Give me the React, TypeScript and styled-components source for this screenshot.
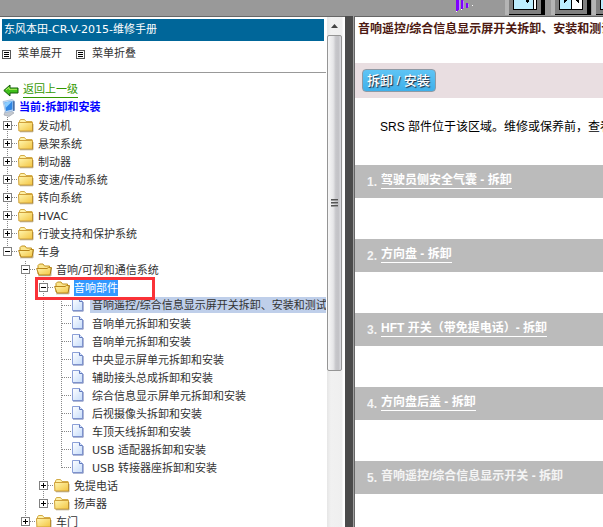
import React from "react";
import styled, { createGlobalStyle, css } from "styled-components";

const GlobalStyle = createGlobalStyle`
  * { box-sizing: border-box; }
  html, body, #root { height: 100%; }
  body { margin: 0; overflow: hidden; background: #fff; }
`;

const Page = styled.div`
  height: 100%;
  display: grid;
  grid-template-rows: 16px minmax(0, 1fr);
  grid-template-columns: 345px 10px minmax(0, 1fr);
`;

const TopBar = styled.header`
  grid-column: 1 / -1;
  background: #999;
  display: flex;
  justify-content: flex-end;
  overflow: hidden;
`;

const Sidebar = styled.aside`
  display: grid;
  grid-template-columns: minmax(0, 1fr) 19px;
  border-top: 1px solid #666;
  min-height: 0;
  font: 11px/18px "DejaVu Sans", "Noto Sans CJK SC", sans-serif;
  color: #333;
`;

const Divider = styled.div`
  background: linear-gradient(90deg, #4b4b4b 0 8px, #a0a0a0 8px 9px, #666 9px);
`;

const MenuPane = styled.nav`
  overflow: hidden;
  padding-top: 2px;
`;

const ManualTitle = styled.h1`
  margin: 0 2px;
  padding-left: 2px;
  height: 22px;
  font: inherit;
  line-height: 22px;
  color: #fff;
  background: #069;
`;

const Actions = styled.div`
  display: flex;
  gap: 14px;
  height: 32px;
  padding: 4px 2px 0;
  border-bottom: 1px solid #999;
`;

const ActionButton = styled.button`
  display: flex;
  align-items: center;
  gap: 7px;
  height: 18px;
  padding: 0;
  border: 0;
  background: none;
  font: inherit;
  color: inherit;
`;

const BackLink = styled.a`
  display: flex;
  align-items: center;
  gap: 4px;
  height: 18px;
  margin-top: 8px;
  padding-left: 3px;
  color: #390;
  text-decoration: none;
  span { line-height: 14px; border-bottom: 1px solid #390; }
`;

const Current = styled.div`
  display: flex;
  align-items: center;
  gap: 3px;
  height: 18px;
  padding-left: 2px;
  line-height: 20px;
  color: #00f;
  font-weight: 700;
`;

const TreeList = styled.ul`
  list-style: none;
  margin: 0;
  padding: 0;
`;

const TreeRow = styled.li`
  display: flex;
  height: 18px;
  white-space: nowrap;
`;

const Rail = styled.span<{ $line: boolean }>`
  flex: none;
  width: 18px;
  background: ${(p) =>
    p.$line
      ? "repeating-linear-gradient(#888 0 1px, transparent 1px 2px) 7px 0 / 1px 100% no-repeat"
      : "none"};
`;

const Toggle = styled.button`
  flex: none;
  width: 18px;
  height: 18px;
  padding: 0;
  border: 0;
  background: none;
  svg { display: block; }
`;

const IconCell = styled.span`
  flex: none;
  width: 18px;
  svg { display: block; }
`;

const Label = styled.a<{ $state?: "marked" | "current" }>`
  margin: 1px 0 0 2px;
  height: 16px;
  line-height: 17px;
  color: inherit;
  text-decoration: none;
  ${(p) => p.$state === "marked" && css`background: #39f; color: #fff;`}
  ${(p) =>
    p.$state === "current" &&
    css`
      margin: 0;
      padding-left: 2px;
      flex: 1;
      overflow: hidden;
      background: #bfcfea;
    `}
`;

const MarkedRow = styled.div`
  position: relative;
  display: flex;
`;

const Marker = styled.span`
  position: absolute;
  left: -1px;
  top: -2px;
  width: 120px;
  height: 23px;
  border: 3px solid #fa3238;
`;

const ScrollTrack = styled.div`
  display: flex;
  flex-direction: column;
  padding-right: 2px;
  background: linear-gradient(90deg, #fff 0 1px, #e6e6e6 1px, #f1f1f1 5px, #efefef 16px, #fff 17px);
`;

const ScrollArrow = styled.button`
  height: 18px;
  width: 17px;
  padding: 0;
  border: 0;
  background: none;
  svg { display: block; }
`;

const Thumb = styled.div`
  display: grid;
  place-items: center;
  height: 336px;
  width: 15px;
  margin-left: 1px;
  border: 1px solid #959595;
  border-radius: 2px;
  background: linear-gradient(90deg, #f7f7f7, #e6e6e8 40%, #c6c6ca 60%, #c2c2c6 80%, #dcdce0);
`;

const Content = styled.main`
  border-top: 1px solid #666;
  overflow: hidden;
  background: #fff;
  font: 12px/18px "Liberation Sans", "Noto Sans CJK SC", sans-serif;
  color: #000;
  white-space: nowrap;
`;

const ArticleTitle = styled.h2`
  margin: 0;
  padding: 3px 3px 0;
  height: 46px;
  font-size: 12px;
  font-weight: 700;
  color: #4d1a12;
`;

const Banner = styled.div`
  height: 35px;
  padding: 6px 7px;
  background: #e9dee1;
`;

const ModeButton = styled.button`
  display: block;
  height: 23px;
  padding: 0 5px 0 4px;
  border: 1px solid #8f9aa5;
  border-radius: 4px;
  background: linear-gradient(#5ec4f5, #3fb0ea);
  color: #fff;
  font: 500 13px/20px "Liberation Sans", "Noto Sans CJK SC", sans-serif;
  text-shadow: 1px 1px 1px #223;
`;

const Notice = styled.p`
  margin: 20px 0 29px;
  padding-left: 25px;
`;

const Steps = styled.ol`
  list-style: none;
  margin: 0;
  padding: 0;
  display: grid;
  gap: 41px;
`;

const Step = styled.li`
  display: flex;
  align-items: flex-start;
  gap: 4px;
  height: 33px;
  padding: 8px 12px 0;
  background: #bbb;
  color: #f4f4f4;
  font-weight: 700;
`;

const StepNumber = styled.span`
  line-height: 18px;
`;

const StepText = styled.span`
  line-height: 15px;
`;

const StepLink = styled.a`
  line-height: 15px;
  color: #fff;
  text-decoration: none;
  border-bottom: 1px solid #fff;
`;

const MenuIcon = () => (
  <svg width="9" height="9" viewBox="0 0 9 9" shapeRendering="crispEdges">
    <path d="M.5 .5h8v8h-8z" fill="#fff" stroke="#555" />
    <path d="M2 2.5h5M2 4.5h5M2 6.5h5" stroke="#000" />
  </svg>
);

const BackArrow = () => (
  <svg width="16" height="13" viewBox="0 0 16 13">
    <path d="M.8 6.5L7 1v3h8v5H7v3z" fill="#3fc01c" stroke="#155c08" />
    <path d="M3 6l3-2.6V5.3h8" fill="none" stroke="#b5ec60" />
  </svg>
);

const Computer = () => (
  <svg width="14" height="18" viewBox="0 0 14 18">
    <path d="M3 12.500l5-1.500 4 3-5 3.500-5-1.500z" fill="#c3c8cf" stroke="#98a0ab" strokeWidth=".6" />
    <path d="M1 2.500L10 .5l2.500 1.500v9.500L3.500 13.500z" fill="#c4dbf4" stroke="#8fb0d8" strokeWidth=".6" />
    <path d="M2.500 3.500L10.500 2v8.500l-6.500 1.500z" fill="#2f86e4" />
    <path d="M2.500 3.500L10.500 2 3.600 9z" fill="#8accff" />
    <path d="M11 2l1.500 .5v9l-1.500 .5z" fill="#4a6fa5" />
  </svg>
);

const Toggler = ({ open, last }: { open: boolean; last?: boolean }) => (
  <svg width="18" height="18" viewBox="0 0 18 18" shapeRendering="crispEdges">
    <path d={`M7.5 0V${last ? 8 : 18}M12 8.5h6`} stroke="#888" strokeDasharray="1 1" />
    <path d="M3.5 4.5h8v8h-8z" fill="#fff" stroke="#808080" />
    <path d={open ? "M5 8.5h5" : "M5 8.5h5M7.5 6v5"} stroke="#000" />
  </svg>
);

const Branch = ({ last }: { last?: boolean }) => (
  <svg width="18" height="18" viewBox="0 0 18 18" shapeRendering="crispEdges">
    <path d={`M7.5 0V${last ? 9 : 18}M8 8.5h10`} stroke="#888" strokeDasharray="1 1" />
  </svg>
);

const Folder = ({ open }: { open: boolean }) => (
  <svg width="18" height="18" viewBox="0 0 18 18">
    <defs>
      <linearGradient id="folder" x2="1" y2="1">
        <stop stopColor="#fff6b0" />
        <stop offset="1" stopColor="#f3c440" />
      </linearGradient>
    </defs>
    {open ? (
      <>
        <path d="M2 13V4.5L3.500 3H7l1.500 2H13.500V13z" fill="#fbe58c" stroke="#c29320" />
        <path d="M.6 7.500H11l1.500-1H15.500L14 14H3z" fill="url(#folder)" stroke="#b9861a" />
      </>
    ) : (
      <>
        <path d="M1.500 6V4L2.500 2.500H6.500L8 4.500H14V7z" fill="#fff1a8" stroke="#d3ac48" />
        <path d="M.5 5.500h14v8.500H.9z" fill="url(#folder)" stroke="#cfa03a" />
      </>
    )}
    <path d="M2 14.800h13V7" fill="none" stroke="#7a5a14" strokeOpacity=".6" strokeWidth=".8" />
  </svg>
);

const Doc = () => (
  <svg width="18" height="18" viewBox="0 0 18 18">
    <defs>
      <linearGradient id="doc" x2="1" y2="1">
        <stop stopColor="#fff" />
        <stop offset="1" stopColor="#c6dcfa" />
      </linearGradient>
    </defs>
    <path d="M.5 1.500H7.500L10.500 4.500v9H.5z" fill="url(#doc)" stroke="#8ca0d8" />
    <path d="M7.500 1.500V4.500H10.500" fill="#d8e4fa" stroke="#6179bd" />
    <path d="M1 14.200h10.200V5" fill="none" stroke="#3d5399" strokeOpacity=".6" />
  </svg>
);

const ToolbarIcons = () => (
  <svg width="153" height="16" viewBox="450 0 153 16" shapeRendering="crispEdges">
    <path d="M456 0h3v10h-1v1h-2zM461 0h2v9h-2zM466 3h2v5h-2z" fill="#7f00ff" />
    <path d="M459 0h1v10h-1zM463 1h1v7h-1zM468 4h1v3h-1z" fill="#b98aff" />
    <path d="M456 11h1v1h-1zM461 9h1v1h-1zM472 5h1v1h-1z" fill="#fff" />
    <path d="M505 0h4v15h-4zM551 0h4v15h-4zM592 0h4v15h-4z" fill="#b4b4b4" />
    <path d="M509 0h32v14h-32zM555 0h32v14h-32zM596 0h7v14h-7z" fill="#808080" />
    <path d="M509 14h32V0h4v15h-36zM555 14h32V0h4v15h-36zM596 14h7v1h-7z" fill="#000" />
    <path d="M513 0h24v10h-24zM559 0h24v10h-24zM600 0h3v10h-3z" fill="#000" />
    <path d="M514 0h19v9h-19zM560 0h11v9h-11zM601 0h2v9h-2z" fill="#bdeeff" />
    <path d="M534 0h2v9h-2zM572 0h10v9h-10z" fill="#fff" />
    <path d="M526 0h3v2h-1v1h-1V2h-1zM564 0h3v1h-1v1h-1v1h-1zM576 0h3v3h-1V2h-1V1h-1z" fill="#000" />
  </svg>
);

type Node = {
  text: string;
  depth: number;
  kind: "closed" | "open" | "doc";
  state?: "marked" | "current";
  last?: boolean;
};

const nodes: Node[] = [
  { text: "发动机", depth: 0, kind: "closed" },
  { text: "悬架系统", depth: 0, kind: "closed" },
  { text: "制动器", depth: 0, kind: "closed" },
  { text: "变速/传动系统", depth: 0, kind: "closed" },
  { text: "转向系统", depth: 0, kind: "closed" },
  { text: "HVAC", depth: 0, kind: "closed" },
  { text: "行驶支持和保护系统", depth: 0, kind: "closed" },
  { text: "车身", depth: 0, kind: "open", last: true },
  { text: "音响/可视和通信系统", depth: 1, kind: "open" },
  { text: "音响部件", depth: 2, kind: "open", state: "marked" },
  { text: "音响遥控/综合信息显示屏开关拆卸、安装和测试", depth: 3, kind: "doc", state: "current" },
  { text: "音响单元拆卸和安装", depth: 3, kind: "doc" },
  { text: "音响单元拆卸和安装", depth: 3, kind: "doc" },
  { text: "中央显示屏单元拆卸和安装", depth: 3, kind: "doc" },
  { text: "辅助接头总成拆卸和安装", depth: 3, kind: "doc" },
  { text: "综合信息显示屏单元拆卸和安装", depth: 3, kind: "doc" },
  { text: "后视摄像头拆卸和安装", depth: 3, kind: "doc" },
  { text: "车顶天线拆卸和安装", depth: 3, kind: "doc" },
  { text: "USB 适配器拆卸和安装", depth: 3, kind: "doc" },
  { text: "USB 转接器座拆卸和安装", depth: 3, kind: "doc", last: true },
  { text: "免提电话", depth: 2, kind: "closed" },
  { text: "扬声器", depth: 2, kind: "closed", last: true },
  { text: "车门", depth: 1, kind: "closed" },
];

const steps = [
  { text: "驾驶员侧安全气囊 - 拆卸", link: true },
  { text: "方向盘 - 拆卸", link: true },
  { text: "HFT 开关（带免提电话）- 拆卸", link: true },
  { text: "方向盘后盖 - 拆卸", link: true },
  { text: "音响遥控/综合信息显示开关 - 拆卸", link: false },
];

const NodeBody = ({ node }: { node: Node }) => (
  <>
    {node.kind === "doc" ? (
      <IconCell><Branch last={node.last} /></IconCell>
    ) : (
      <Toggle aria-label={node.kind === "open" ? "折叠" : "展开"}>
        <Toggler open={node.kind === "open"} last={node.last} />
      </Toggle>
    )}
    <IconCell>{node.kind === "doc" ? <Doc /> : <Folder open={node.kind === "open"} />}</IconCell>
    <Label href="#" $state={node.state}>{node.text}</Label>
  </>
);

const TreeNode = ({ node }: { node: Node }) => (
  <TreeRow>
    {Array.from({ length: node.depth }, (_, i) => (
      <Rail key={i} $line={i > 0} />
    ))}
    {node.state === "marked" ? (
      <MarkedRow>
        <NodeBody node={node} />
        <Marker />
      </MarkedRow>
    ) : (
      <NodeBody node={node} />
    )}
  </TreeRow>
);

export default function App() {
  return (
    <>
      <GlobalStyle />
      <Page>
        <TopBar><ToolbarIcons /></TopBar>
        <Sidebar>
          <MenuPane>
            <ManualTitle>东风本田-CR-V-2015-维修手册</ManualTitle>
            <Actions>
              <ActionButton><MenuIcon />菜单展开</ActionButton>
              <ActionButton><MenuIcon />菜单折叠</ActionButton>
            </Actions>
            <BackLink href="#"><BackArrow /><span>返回上一级</span></BackLink>
            <Current><Computer />当前:拆卸和安装</Current>
            <TreeList>
              {nodes.map((node, i) => <TreeNode key={i} node={node} />)}
            </TreeList>
          </MenuPane>
          <ScrollTrack>
            <ScrollArrow aria-label="向上滚动">
              <svg width="17" height="18" viewBox="0 0 17 18">
                <path d="M5 11l3.500-4L12 11z" fill="#444" />
              </svg>
            </ScrollArrow>
            <Thumb>
              <svg width="7" height="8" viewBox="0 0 7 8" shapeRendering="crispEdges">
                <path d="M0 .5h7M0 3.500h7M0 6.500h7" stroke="#555" />
                <path d="M0 1.500h7M0 4.500h7M0 7.500h7" stroke="#999" />
              </svg>
            </Thumb>
          </ScrollTrack>
        </Sidebar>
        <Divider />
        <Content>
          <ArticleTitle>音响遥控/综合信息显示屏开关拆卸、安装和测试</ArticleTitle>
          <Banner><ModeButton>拆卸 / 安装</ModeButton></Banner>
          <Notice>SRS 部件位于该区域。维修或保养前，查看</Notice>
          <Steps>
            {steps.map((step, i) => (
              <Step key={step.text}>
                <StepNumber>{i + 1}.</StepNumber>
                {step.link ? <StepLink href="#">{step.text}</StepLink> : <StepText>{step.text}</StepText>}
              </Step>
            ))}
          </Steps>
        </Content>
      </Page>
    </>
  );
}
